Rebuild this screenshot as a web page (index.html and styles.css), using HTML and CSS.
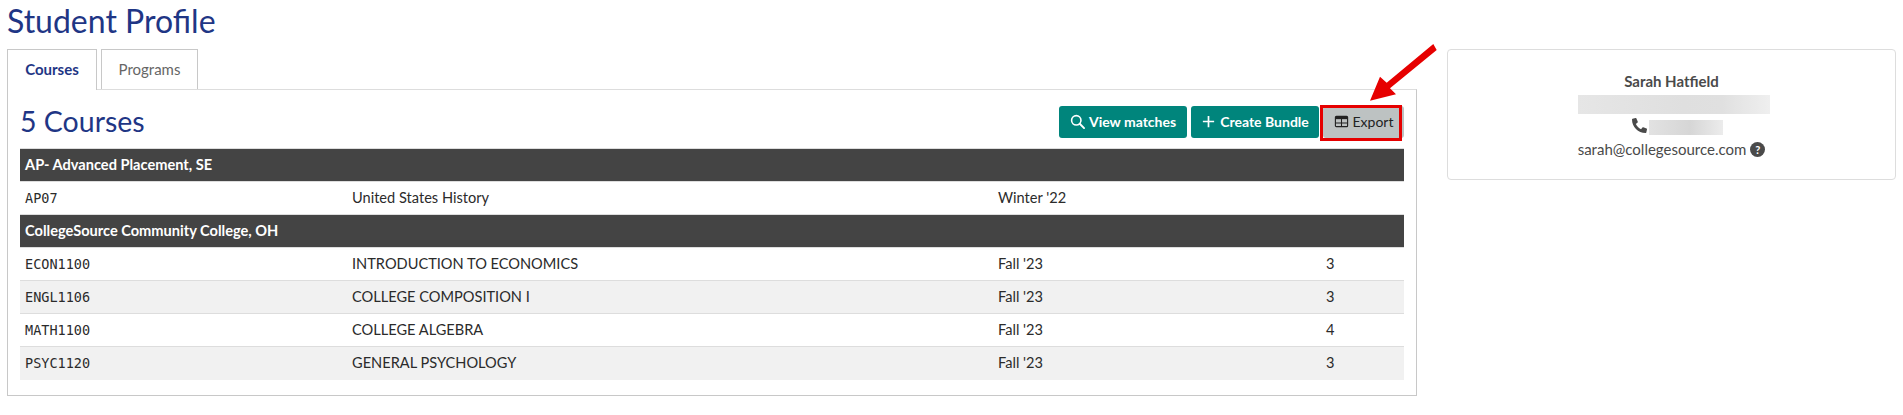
FILE: index.html
```html
<!DOCTYPE html>
<html lang="en">
<head>
    <meta charset="UTF-8">
    <title>Student Profile</title>
    <link rel="stylesheet" href="styles.css">
</head>
<body>
    <h1 class="page-title">Student Profile</h1>
    <div class="layout">
        <div class="main-col">
            <div class="tabs">
                <a class="tab active">Courses</a>
                <a class="tab">Programs</a>
            </div>
            <div class="panel">
                <div class="panel-head">
                    <h2 class="course-count">5 Courses</h2>
                    <div class="actions">
                        <button class="btn btn-teal">
                            <svg class="btn-icon" viewBox="0 0 16 16"><circle cx="6.7" cy="6.7" r="5" fill="none" stroke="currentColor" stroke-width="1.7"/><path d="M10.4 10.4L15 15" stroke="currentColor" stroke-width="2" stroke-linecap="round"/></svg>
                            View matches
                        </button>
                        <button class="btn btn-teal">
                            <svg class="btn-icon" viewBox="0 0 16 16"><path d="M8 2v12M2 8h12" stroke="currentColor" stroke-width="1.8"/></svg>
                            Create Bundle
                        </button>
                        <div class="export-wrap">
                            <button class="btn btn-grey">
                                <svg class="btn-icon" viewBox="0 0 16 16"><rect x="1.5" y="2.5" width="13" height="11" rx="1" fill="none" stroke="currentColor" stroke-width="1.2"/><path d="M1.5 3h13v2.5h-13z" fill="currentColor"/><path d="M1.5 9.5h13M8 5v8.5" stroke="currentColor" stroke-width="1.1"/></svg>
                                Export
                            </button>
                            <span class="highlight"></span>
                            <svg class="arrow" viewBox="0 0 70 60"><path d="M2 58.700L12 34.700L18.700 40.700L65.300 2L68.700 8L22 46.300L28 52.300Z" fill="#e60000"/></svg>
                        </div>
                    </div>
                </div>
                <table class="courses">
                    <colgroup>
                        <col class="col-code"><col class="col-name"><col class="col-term"><col>
                    </colgroup>
                    <tbody>
                        <tr class="school"><th colspan="4">AP- Advanced Placement, SE</th></tr>
                        <tr><td class="code">AP07</td><td>United States History</td><td>Winter '22</td><td></td></tr>
                        <tr class="school"><th colspan="4">CollegeSource Community College, OH</th></tr>
                        <tr><td class="code">ECON1100</td><td>INTRODUCTION TO ECONOMICS</td><td>Fall '23</td><td>3</td></tr>
                        <tr class="alt"><td class="code">ENGL1106</td><td>COLLEGE COMPOSITION I</td><td>Fall '23</td><td>3</td></tr>
                        <tr><td class="code">MATH1100</td><td>COLLEGE ALGEBRA</td><td>Fall '23</td><td>4</td></tr>
                        <tr class="alt"><td class="code">PSYC1120</td><td>GENERAL PSYCHOLOGY</td><td>Fall '23</td><td>3</td></tr>
                    </tbody>
                </table>
            </div>
        </div>
        <aside class="profile-card">
            <div class="profile-name">Sarah Hatfield</div>
            <div class="blur blur-address"></div>
            <div class="phone-row">
                <svg class="phone-icon" viewBox="0 0 512 512"><path fill="#4a4a4a" d="M493.400 24.600l-104-24c-11.300-2.600-22.900 3.300-27.500 13.900l-48 112c-4.200 9.800-1.400 21.300 6.900 28l60.600 49.600c-36 76.700-98.900 140.500-177.200 177.200l-49.600-60.600c-6.800-8.300-18.200-11.100-28-6.900l-112 48C3.900 366.500-2 378.100.6 389.400l24 104C27.100 504.200 36.700 512 48 512c256.100 0 464-207.500 464-464 0-11.200-7.700-20.900-18.600-23.400z" transform="matrix(-1 0 0 1 512 0)"/></svg>
                <div class="blur blur-phone"></div>
            </div>
            <div class="email-row">
                sarah@collegesource.com
                <span class="help-dot">?</span>
            </div>
        </aside>
    </div>
</body>
</html>
```

FILE: styles.css
```css
* {
    box-sizing: border-box;
}
body {
    margin: 0;
    padding: 0 7px;
    background: #fff;
    color: #2b2b2b;
    font-family: Lato, sans-serif;
    font-size: 14.600px;
}
.page-title {
    margin: 0;
    height: 49px;
    padding-top: 2px;
    font-size: 32px;
    line-height: 38px;
    font-weight: 400;
    color: #1f3685;
}
.layout {
    display: flex;
    align-items: flex-start;
    gap: 30px;
}
.main-col {
    width: 1410px;
}
.tabs {
    display: flex;
    gap: 4px;
    height: 41px;
    position: relative;
    z-index: 1;
}
.tab {
    display: flex;
    align-items: center;
    justify-content: center;
    height: 41px;
    padding-bottom: 2px;
    border: 1px solid #c8c8c8;
    border-bottom: none;
    color: #666;
    font-size: 15px;
}
.tab:first-child {
    width: 90px;
}
.tab:last-child {
    width: 97px;
    height: 40px;
}
.tab.active {
    background: #fff;
    color: #1f3685;
    font-weight: 700;
}
.panel {
    margin-top: -1px;
    height: 307px;
    padding: 0 12px;
    border: 1px solid #c8c8c8;
    border-top-color: #ddd;
}
.panel-head {
    display: flex;
    justify-content: space-between;
    align-items: flex-start;
    height: 58px;
    padding-top: 16px;
}
.course-count {
    margin: 0;
    font-size: 28.500px;
    line-height: 30px;
    font-weight: 400;
    color: #1f3685;
}
.actions {
    display: flex;
    gap: 4px;
}
.btn {
    display: flex;
    align-items: center;
    justify-content: center;
    gap: 4px;
    height: 32px;
    padding: 0 0 2px;
    border: none;
    border-radius: 3px;
    font: inherit;
    font-size: 14px;
    font-weight: 700;
}
.btn-teal {
    width: 128px;
    background: #00857c;
    color: #fff;
}
.btn-grey {
    width: 81px;
    background: #bdc2c2;
    color: #222;
    font-weight: 400;
}
.btn-icon {
    width: 15px;
    height: 15px;
    flex: none;
}
.export-wrap {
    position: relative;
}
.highlight {
    position: absolute;
    left: -3px;
    top: -1px;
    width: 82px;
    height: 36px;
    border: 3px solid #e60000;
}
.arrow {
    position: absolute;
    left: 45px;
    top: -64px;
    width: 70px;
    height: 60px;
}
.courses {
    width: 100%;
    border-collapse: collapse;
    table-layout: fixed;
}
.col-code {
    width: 327px;
}
.col-name {
    width: 646px;
}
.col-term {
    width: 328px;
}
.courses th,
.courses td {
    height: 33px;
    padding: 0 5px 1px;
    text-align: left;
    border-top: 1px solid #ddd;
}
.school th {
    background: #444;
    color: #fff;
    font-weight: 700;
}
.alt td {
    background: #f1f1f1;
}
.courses .code {
    font-family: "DejaVu Sans Mono", monospace;
    font-size: 13.500px;
}
.profile-card {
    width: 449px;
    height: 131px;
    padding-top: 22px;
    border: 1px solid #ddd;
    border-radius: 4px;
    text-align: center;
    color: #4a4a4a;
    font-size: 15px;
}
.profile-name {
    font-weight: 700;
    line-height: 18px;
}
.blur {
    background: linear-gradient(90deg, #e6e6e6, #dfdfdf 55%, #e0e0e0 75%, #efefef);
}
.blur-address {
    width: 192px;
    height: 19px;
    margin: 5px 0 0 130px;
}
.phone-row {
    display: flex;
    justify-content: center;
    gap: 2px;
    height: 17px;
    margin-top: 4px;
    padding-left: 12px;
}
.phone-icon {
    width: 15px;
    height: 15px;
}
.blur-phone {
    width: 74px;
    height: 15px;
    margin-top: 2px;
    background: linear-gradient(90deg, #e2e2e2, #d6d6d6 55%, #ececec);
}
.email-row {
    display: flex;
    justify-content: center;
    align-items: center;
    gap: 4px;
    margin-top: 5px;
    line-height: 18px;
}
.help-dot {
    width: 15px;
    height: 15px;
    border-radius: 50%;
    background: #4a4a4a;
    color: #fff;
    font-size: 11px;
    font-weight: 700;
    line-height: 15px;
}
```
